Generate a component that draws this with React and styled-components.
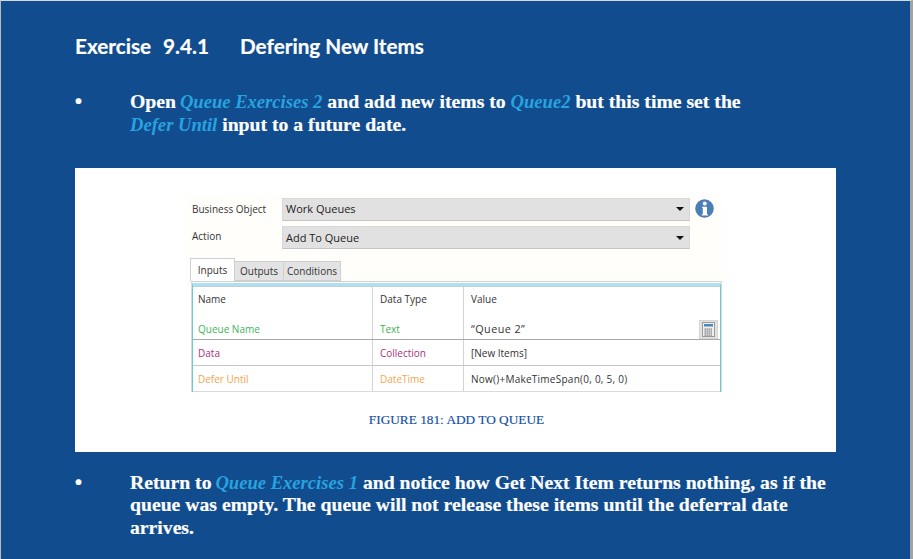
import React from "react";
import styled, { createGlobalStyle } from "styled-components";

const Global = createGlobalStyle`
  html, body { margin: 0; padding: 0; background: #fff; }
  #root { width: 913px; height: 559px; overflow: hidden; }
`;
const Page = styled.main`
  box-sizing: border-box;
  width: 913px;
  height: 559px;
  background: #104c8e;
  border-top: 1px solid #d8d8d8;
  border-left: 1px solid #b9b9b9;
  border-right: 3px solid #a3a3a3;
  padding: 31px 0 0 74px;
  overflow: hidden;
`;
const Heading = styled.h1`
  display: flex;
  margin: 0 0 30px;
  font: 700 20.7px/28px "Lato", "Noto Sans", sans-serif;
  color: #fff;
  -webkit-text-stroke: 0.2px #fff;
`;
const Num = styled.span`
  width: 165px;
  display: flex;
  gap: 12px;
`;
const Item = styled.div`
  display: flex;
  width: 755px;
  font: 700 19.7px/22.5px "Liberation Serif", serif;
  color: #fff;
  -webkit-text-stroke: 0.2px #fff;
`;
const Bullet = styled.span`
  width: 55px;
  flex: none;
  font-family: "Liberation Sans", sans-serif;
`;
const Em = styled.i`
  color: #29a3df;
  font-weight: 700;
  font-size: 18.6px;
  line-height: 0;
  margin-left: ${p => (p.$tight ? -1 : 0)}px;
  -webkit-text-stroke: 0;
`;
const Figure = styled.figure`
  box-sizing: border-box;
  margin: 33px 0 18.5px;
  width: 761px;
  height: 284px;
  background: #fff;
  padding: 27px 0 0 111px;
`;
const Shot = styled.div`
  box-sizing: border-box;
  width: 537px;
  height: 197px;
  background: #fffefb;
  padding: 0 0 0 5px;
  font: 400 10px/14px "Open Sans", "Noto Sans", sans-serif;
  color: #333;
`;
const FormRow = styled.div`
  display: grid;
  grid-template-columns: 91px 408px 30px;
  align-items: center;
  height: ${p => p.$h}px;
`;
const Label = styled.span`
  padding-left: 1px;
  padding-bottom: ${p => (p.$up ? 3 : 0)}px;
`;
const Select = styled.div`
  box-sizing: border-box;
  height: 23px;
  background: #e1e1e1;
  border: 1px solid #d8d8d8;
  border-bottom-color: #c4c4c4;
  padding: 0 4px 0 3px;
  display: flex;
  align-items: center;
  justify-content: space-between;
  font-size: 11px;
  color: #222;
`;
const Caret = styled.span`
  width: 0; height: 0;
  margin-right: 1px;
  border: 4px solid transparent;
  border-top: 4px solid #111;
  border-bottom: 0;
`;
const Info = styled.svg`
  width: 19px; height: 19px;
  margin-left: 5px;
  margin-bottom: 2px;
`;
const Tabs = styled.div`
  display: flex;
  align-items: flex-end;
  height: 29px;
  margin-left: -1px;
`;
const Tab = styled.div`
  box-sizing: border-box;
  width: ${p => p.$w}px;
  text-align: center;
  height: ${p => (p.$active ? 23 : 20)}px;
  line-height: ${p => (p.$active ? 22 : 18)}px;
  background: ${p => (p.$active ? "#fff" : "#e3e3e3")};
  border: 1px solid #cfcfcf;
  border-bottom: ${p => (p.$active ? "0" : "1px solid #cfcfcf")};
  border-left: ${p => (p.$active ? "1px solid #cfcfcf" : "0")};
`;
const Frame = styled.div`
  box-sizing: border-box;
  width: 531px;
  height: 111px;
  border: 1px solid #d4dcdc;
  border-top: 1px solid #d0d0d0;
  border-bottom: 0;
  background: #fff;
  padding-top: 1px;
`;
const Inner = styled.div`
  height: 100%;
  border-top: 3px solid #aee0f2;
  border-left: 1px solid #6fc9d3;
  border-right: 1px solid #6fc9d3;
  box-sizing: border-box;
`;
const Table = styled.div`
  border-top: 1px solid #bcd2d6;
  height: 100%;
`;
const Row = styled.div`
  display: grid;
  grid-template-columns: 179px 91px 1fr;
  box-sizing: border-box;
  height: ${p => p.$h}px;
  border-bottom: ${p => (p.$line ? `1px solid ${p.$line}` : "0")};
  color: ${p => p.$color || "#333"};
`;
const Cell = styled.div`
  box-sizing: border-box;
  display: flex;
  align-items: center;
  padding-left: ${p => (p.$first ? 5 : 7)}px;
  padding-top: ${p => p.$pad || 0}px;
  border-left: ${p => (p.$first ? "0" : "1px solid #d4d4d4")};
  position: relative;
`;
const Value = styled.span`
  color: #333;
  font-size: ${p => p.$size || 10}px;
  letter-spacing: ${p => p.$track || 0}px;
`;
const CalcBtn = styled.span`
  position: absolute;
  right: 2px;
  bottom: 0;
  width: 19px;
  height: 19px;
  background: #e2e2e2;
  border: 1px solid #d5d5d5;
  box-sizing: border-box;
  display: flex;
  align-items: center;
  justify-content: center;
`;
const Caption = styled.figcaption`
  margin-top: 19px;
  padding-right: 109px;
  text-align: center;
  font: 400 13.3px/18px "Liberation Serif", serif;
  color: #0f4ea6;
  -webkit-text-stroke: 0.15px #0f4ea6;
`;

const keyRows = [6.5, 8.5, 10.5, 12.5];
const keyCols = [2.5, 4.5, 6.5, 8.5];

export default function App() {
  return (
    <Page>
      <Global />
      <Heading>
        <Num><span>Exercise</span><span>9.4.1</span></Num>
        <span>Defering New Items</span>
      </Heading>
      <Item>
        <Bullet>•</Bullet>
        <div>
          Open <Em $tight>Queue Exercises 2</Em> and add new items to <Em>Queue2</Em> but this time set the<br />
          <Em>Defer Until</Em> input to a future date.
        </div>
      </Item>
      <Figure>
        <Shot>
          <FormRow $h={28}>
            <Label>Business Object</Label>
            <Select>Work Queues<Caret /></Select>
            <Info viewBox="0 0 19 19">
              <circle cx="9.5" cy="9.5" r="9.3" fill="#4a7fb5" />
              <circle cx="9.7" cy="4.6" r="2" fill="#fff" />
              <path d="M7.2 7.8h4.8v7.4h1v1.2H6.8v-1.2h1V9h-.6z" fill="#fff" />
            </Info>
          </FormRow>
          <FormRow $h={29}>
            <Label $up>Action</Label>
            <Select>Add To Queue<Caret /></Select>
          </FormRow>
          <Tabs>
            <Tab $active $w={45}>Inputs</Tab>
            <Tab $w={49}>Outputs</Tab>
            <Tab $w={57}>Conditions</Tab>
          </Tabs>
          <Frame>
            <Inner>
              <Table>
                <Row $h={24}>
                  <Cell $first>Name</Cell>
                  <Cell>Data Type</Cell>
                  <Cell>Value</Cell>
                </Row>
                <Row $h={29} $line="#a9a9a9" $color="#3fb256">
                  <Cell $first $pad={8}>Queue Name</Cell>
                  <Cell $pad={8}>Text</Cell>
                  <Cell $pad={8}>
                    <Value $size={10.8} $track={0.45}>“Queue 2”</Value>
                    <CalcBtn>
                      <svg width="13" height="15" viewBox="0 0 13 15">
                        <rect x="0.5" y="0.5" width="12" height="14" fill="#efefef" stroke="#9a9a9a" />
                        <rect x="2" y="2" width="9" height="2.5" fill="#4f86b8" />
                        {keyRows.map(y =>
                          keyCols.map(x => (
                            <rect key={`${x}-${y}`} x={x} y={y} width="1.4" height="1.2" fill="#777" />
                          ))
                        )}
                      </svg>
                    </CalcBtn>
                  </Cell>
                </Row>
                <Row $h={26} $line="#c6c6c6" $color="#a8307c">
                  <Cell $first $pad={1}>Data</Cell>
                  <Cell $pad={1}>Collection</Cell>
                  <Cell $pad={1}><Value>[New Items]</Value></Cell>
                </Row>
                <Row $h={26} $line="#dadada" $color="#f0a650">
                  <Cell $first>Defer Until</Cell>
                  <Cell>DateTime</Cell>
                  <Cell><Value $track={0.25}>Now()+MakeTimeSpan(0, 0, 5, 0)</Value></Cell>
                </Row>
              </Table>
            </Inner>
          </Frame>
        </Shot>
        <Caption>FIGURE 181: ADD TO QUEUE</Caption>
      </Figure>
      <Item>
        <Bullet>•</Bullet>
        <div>
          Return to <Em $tight>Queue Exercises 1</Em> and notice how Get Next Item returns nothing, as if the queue was empty. The queue will not release these items until the deferral date arrives.
        </div>
      </Item>
    </Page>
  );
}
